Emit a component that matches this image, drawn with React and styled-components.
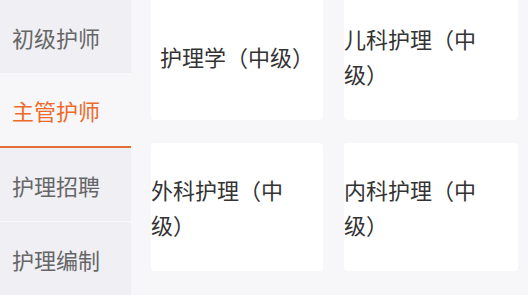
import React from "react";
import styled, { createGlobalStyle } from "styled-components";

const GlobalStyle = createGlobalStyle`
  html, body {
    margin: 0;
    padding: 0;
    background: #f7f7f9;
    font-family: "Noto Sans CJK SC", "Noto Sans", sans-serif;
  }
`;

const Page = styled.div`
  display: flex;
  width: 528px;
  height: 295px;
  overflow: hidden;
  background: #f7f7f9;
`;

const Sidebar = styled.div`
  display: flex;
  flex-direction: column;
  width: 131px;
  flex-shrink: 0;
`;

const NavItem = styled.div`
  display: flex;
  align-items: center;
  box-sizing: border-box;
  height: ${(p) => (p.active ? "75px" : "74px")};
  padding: 1px 0 0 12px;
  font-size: 22px;
  color: ${(p) => (p.active ? "#ee6a2a" : "#666")};
  background: ${(p) => (p.active ? "#f7f7f9" : "#efeff4")};
  border-bottom: ${(p) =>
    p.active ? "2px solid #e46e37" : p.line ? "1px solid #fafafc" : "none"};
`;

const Content = styled.div`
  flex: 1;
  padding: 0 10px 0 20px;
`;

const Grid = styled.div`
  display: grid;
  grid-template-columns: 172px 174px;
  grid-auto-rows: 128px;
  column-gap: 21px;
  row-gap: 23px;
  margin-top: -8px;
`;

const Card = styled.div`
  display: flex;
  align-items: center;
  justify-content: center;
  background: #fff;
  border-radius: 4px;
  font-size: 22px;
  line-height: 35px;
  color: #333;
  text-spacing-trim: space-all;
`;

const CardText = styled.span`
  display: block;
`;

const nav = [
  { label: "初级护师", line: true },
  { label: "主管护师", active: true },
  { label: "护理招聘", line: true },
  { label: "护理编制" },
];

const cards = ["护理学（中级）", "儿科护理（中级）", "外科护理（中级）", "内科护理（中级）"];

export default function App() {
  return (
    <>
      <GlobalStyle />
      <Page>
        <Sidebar>
          {nav.map((n) => (
            <NavItem key={n.label} active={n.active} line={n.line}>
              {n.label}
            </NavItem>
          ))}
        </Sidebar>
        <Content>
          <Grid>
            {cards.map((c) => (
              <Card key={c}>
                <CardText>{c}</CardText>
              </Card>
            ))}
          </Grid>
        </Content>
      </Page>
    </>
  );
}
